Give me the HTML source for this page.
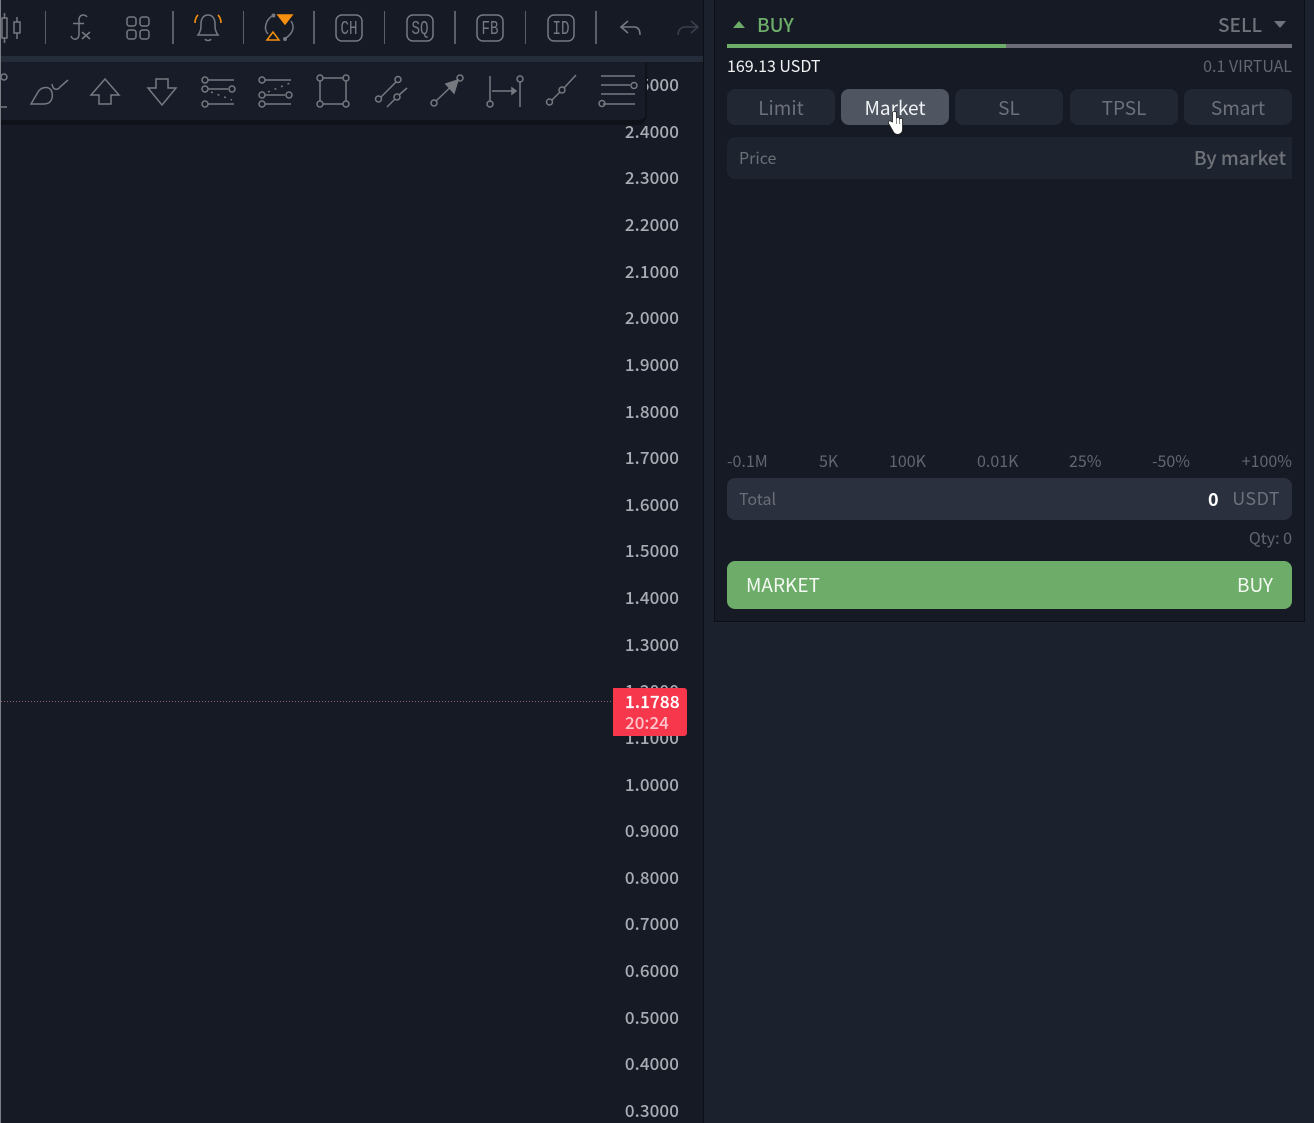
<!DOCTYPE html>
<html><head><meta charset="utf-8"><style>
*{box-sizing:border-box;margin:0;padding:0}
html,body{width:1314px;height:1123px;overflow:hidden;background:#1b222d;font-family:"Noto Sans CJK JP","Liberation Sans",sans-serif}
.a{position:absolute}
.t{position:absolute;white-space:nowrap;line-height:20px}
.y{position:absolute;right:635px;width:70px;text-align:right;color:#a9acb3;font-size:17px;font-weight:500;letter-spacing:.1px;line-height:20px;height:20px}
.tab{position:absolute;top:89px;height:36px;width:108px;border-radius:8px;background:#212733;color:#6d717b;font-size:19px;line-height:37px;text-align:center}
.sl{position:absolute;top:450px;color:#62666f;font-size:16px;line-height:20px;white-space:nowrap}
svg{position:absolute;left:0;top:0}
</style></head><body>
<div class="a" style="left:0;top:0;width:703px;height:1123px;background:#151a25"></div>
<div class="a" style="left:0;top:0;width:1px;height:1123px;background:#7c7f85"></div>
<div class="a" style="left:1px;top:56px;width:702px;height:6px;background:#252d3a"></div>
<div class="a" style="left:703px;top:0;width:1px;height:1123px;background:#0c0f15"></div>

<div class="y" style="top:74px">2.5000</div>
<div class="y" style="top:121px">2.4000</div><div class="y" style="top:167px">2.3000</div><div class="y" style="top:214px">2.2000</div><div class="y" style="top:261px">2.1000</div><div class="y" style="top:307px">2.0000</div><div class="y" style="top:354px">1.9000</div><div class="y" style="top:401px">1.8000</div><div class="y" style="top:447px">1.7000</div><div class="y" style="top:494px">1.6000</div><div class="y" style="top:540px">1.5000</div><div class="y" style="top:587px">1.4000</div><div class="y" style="top:634px">1.3000</div><div class="y" style="top:680px">1.2000</div><div class="y" style="top:727px">1.1000</div><div class="y" style="top:774px">1.0000</div><div class="y" style="top:820px">0.9000</div><div class="y" style="top:867px">0.8000</div><div class="y" style="top:913px">0.7000</div><div class="y" style="top:960px">0.6000</div><div class="y" style="top:1007px">0.5000</div><div class="y" style="top:1053px">0.4000</div><div class="y" style="top:1100px">0.3000</div>

<div class="a" style="left:1px;top:62px;width:646px;height:63px;background:#171c28;border-radius:0 0 10px 0;border-bottom:5px solid #0f1219;border-right:2px solid #10131a"></div>

<svg width="704" height="124" viewBox="0 0 704 124" fill="none" stroke="#767980" stroke-width="1.5">
<!-- separators -->
<g stroke="#5a5e67" stroke-width="1"><path d="M45.500 11V44M243.500 11V44M384.500 11V44M525.500 11V44"/></g>
<g stroke="#5a5e67" stroke-width="2"><path d="M173 11V44M314 11V44M455 11V44M596 11V44"/></g>
<!-- candles -->
<path d="M2 18H7V38H2ZM4.500 13V18M4.500 38V43M14 22H20V33H14ZM17 17V22M17 33V39"/>
<!-- fx -->
<path d="M87 17C85 14 79 14 79 20V34C79 40 73 41 71 36"/><path d="M73 23.500H84M82 32L90 39M90 32L82 39"/>
<!-- grid -->
<rect x="127" y="17" width="9" height="9" rx="2.500"/><rect x="140" y="17" width="9" height="9" rx="2.500"/><rect x="127" y="30" width="9" height="9" rx="2.500"/><rect x="140" y="30" width="9" height="9" rx="2.500"/>
<!-- bell -->
<path d="M198 35C201 31 201 28 201 24C201 18 204 15 208 15C212 15 215 18 215 24C215 28 215 31 218 35Z"/><path d="M205 39C206 41 210 41 211 39"/>
<path d="M195 23C195 20 196 17 198 15M221 23C221 20 220 17 218 15" stroke="#f78f0f" stroke-width="1.6"/>
<!-- alert swap -->
<path d="M272 16C266 20 263 29 268 34M286 38C293 33 295 27 291 21"/><circle cx="273.500" cy="15.500" r="1.200" fill="#767980"/><circle cx="285" cy="39" r="1.200" fill="#767980"/>
<path d="M278 15H292L285 24Z" fill="#f78f0f" stroke="#f78f0f"/><path d="M267 40L273 32L279 40Z" stroke="#f78f0f" stroke-width="1.500"/>
<!-- boxes -->
<rect x="336" y="15" width="26" height="26" rx="6"/><rect x="407" y="15" width="26" height="26" rx="6"/><rect x="477" y="15" width="26" height="26" rx="6"/><rect x="548" y="15" width="26" height="26" rx="6"/>
<g fill="#767980" stroke="none" font-family="Liberation Mono,monospace" font-size="19" text-anchor="middle"><text x="349" y="34" textLength="17" lengthAdjust="spacingAndGlyphs">CH</text><text x="420" y="34" textLength="17" lengthAdjust="spacingAndGlyphs">SQ</text><text x="490" y="34" textLength="17" lengthAdjust="spacingAndGlyphs">FB</text><text x="561" y="34" textLength="17" lengthAdjust="spacingAndGlyphs">ID</text></g>
<!-- undo redo -->
<path d="M628 21L621 27L628 33M621 27H634C638 27 640 30 640 35" stroke-width="1.6"/>
<path d="M691 21L698 27L691 33M698 27H685C681 27 678 30 678 35" stroke="#39404b" stroke-width="1.6"/>

<!-- toolbar 2 -->
<circle cx="4" cy="77" r="3"/><path d="M1 107H7"/>
<path d="M31 104H44C52 104 54 96 51 90C48 86 41 87 38 92Z"/><path d="M52 84C53 91 58 90 60 87L68 80"/>
<path d="M105 79L119 95H111V104H99V95H91Z"/><path d="M162 105L176 88H168V79H156V88H148Z"/>
<circle cx="205" cy="80" r="3"/><path d="M208 80H234"/><circle cx="205" cy="89" r="3"/><path d="M208 89H228"/><circle cx="232" cy="89" r="3"/><circle cx="205" cy="104" r="3"/><path d="M208 104H234"/><path d="M211 92L232 100" stroke-dasharray="2 5"/>
<circle cx="262" cy="80" r="3"/><path d="M265 80H291"/><circle cx="262" cy="95" r="3"/><path d="M265 95H285"/><circle cx="289" cy="95" r="3"/><circle cx="262" cy="104" r="3"/><path d="M265 104H291"/><path d="M268 92L290 83" stroke-dasharray="2 5"/>
<path d="M320 78H346M320 104H346M320 78V104M346 78V104"/><g fill="#171c28"><circle cx="320" cy="78" r="3"/><circle cx="346" cy="78" r="3"/><circle cx="320" cy="104" r="3"/><circle cx="346" cy="104" r="3"/></g>
<circle cx="378.500" cy="99" r="3"/><circle cx="398" cy="79.500" r="3"/><path d="M381 97L396 82"/><circle cx="397" cy="97" r="3"/><path d="M387 107L395 99M399 95L407 88"/>
<circle cx="434" cy="103" r="3"/><circle cx="460" cy="78" r="3"/><path d="M436 101L458 80"/><path d="M446 84L458 80L454 93Z" fill="#767980"/>
<path d="M490 76V102M520 82V107M492 91H516"/><path d="M516 91L512 88V94Z" fill="#767980"/><circle cx="490" cy="104" r="3"/><circle cx="520" cy="79" r="3"/>
<circle cx="549.500" cy="102" r="3"/><circle cx="562" cy="90" r="3"/><path d="M552 100L560 92M564 88L576 75"/>
<path d="M601 76H635M601 85H630M601 94H635M603 104H635"/><circle cx="634" cy="85.500" r="3"/><circle cx="602" cy="103.500" r="3"/>
</svg>

<div class="a" style="left:1px;top:701px;width:610px;height:1px;background-image:repeating-linear-gradient(90deg,#8e6270 0 1px,transparent 1px 3px)"></div>
<div class="a" style="left:613px;top:688px;width:74px;height:48px;background:#f7374c;border-radius:0 3px 3px 0"></div>
<div class="t" style="left:625px;top:691px;color:#fff;font-size:17px;font-weight:500;letter-spacing:.2px;-webkit-text-stroke:.2px #fff">1.1788</div>
<div class="t" style="left:625px;top:712px;color:#fcc5cc;font-size:17px;font-weight:500">20:24</div>

<!-- panel -->
<div class="a" style="left:714px;top:-1px;width:591px;height:623px;background:#151a25;border:1px solid #0c0f15"></div>
<svg width="1314" height="60" viewBox="0 0 1314 60"><path d="M733 28L739 21L745 28Z" fill="#6dad69"/><path d="M1274 21H1286L1280 28Z" fill="#72747b"/></svg>
<div class="t" style="left:757px;top:15px;color:#6dad69;font-size:19px;font-weight:500">BUY</div>
<div class="t" style="left:1218px;top:15px;color:#6f7279;font-size:19px;font-weight:500">SELL</div>
<div class="a" style="left:727px;top:44px;width:279px;height:4px;background:#6dad69"></div>
<div class="a" style="left:1006px;top:44px;width:286px;height:4px;background:#6b6c76"></div>
<div class="t" style="left:727px;top:55px;color:#f2f2f2;font-size:16px">169.13 USDT</div>
<div class="t" style="right:22px;top:55px;color:#62666f;font-size:16px">0.1 VIRTUAL</div>

<div class="tab" style="left:727px">Limit</div>
<div class="tab" style="left:841px;background:#4f5561;color:#f0f2f5">Market</div>
<div class="tab" style="left:955px">SL</div>
<div class="tab" style="left:1070px">TPSL</div>
<div class="tab" style="left:1184px">Smart</div>
<svg width="1314" height="140" viewBox="0 0 1314 140"><g transform="translate(-1.500 2)"><path d="M894 111V120L892 119C890 118 889 121 891 123L895 130C896 132 899 133 901 132C903 131 904 130 904 127V118C904 116 902 116 901 117C901 115 899 115 898 116V111C898 109 894 109 894 111Z" fill="#fff" stroke="#222" stroke-width=".8"/><path d="M898 116V122M901 117V122" stroke="#555" stroke-width=".7"/></g></svg>

<div class="a" style="left:727px;top:137px;width:565px;height:42px;background:#1e242f;border-radius:8px 0 0 8px"></div>
<div class="t" style="left:739px;top:147px;color:#6a6e77;font-size:16px">Price</div>
<div class="t" style="right:28px;top:148px;color:#6f7279;font-size:19px;font-weight:500">By market</div>

<div class="sl" style="left:727px">-0.1M</div><div class="sl" style="left:819px">5K</div><div class="sl" style="left:889px">100K</div><div class="sl" style="left:977px">0.01K</div><div class="sl" style="left:1069px">25%</div><div class="sl" style="left:1152px">-50%</div><div class="sl" style="right:22px">+100%</div>

<div class="a" style="left:727px;top:478px;width:565px;height:42px;background:#2a303d;border-radius:8px"></div>
<div class="t" style="left:739px;top:488px;color:#6a6e77;font-size:16px">Total</div>
<div class="t" style="left:1208px;top:489px;color:#fff;font-size:18px;font-weight:700">0</div>
<div class="t" style="right:34px;top:488px;color:#6d717b;font-size:18px;letter-spacing:.4px">USDT</div>
<div class="t" style="right:22px;top:527px;color:#62666f;font-size:16px">Qty: 0</div>

<div class="a" style="left:727px;top:561px;width:565px;height:48px;background:#6dad69;border-radius:8px"></div>
<div class="t" style="left:746px;top:575px;color:#f4f8f2;font-size:19px">MARKET</div>
<div class="t" style="right:41px;top:575px;color:#f4f8f2;font-size:19px">BUY</div>
</body></html>
